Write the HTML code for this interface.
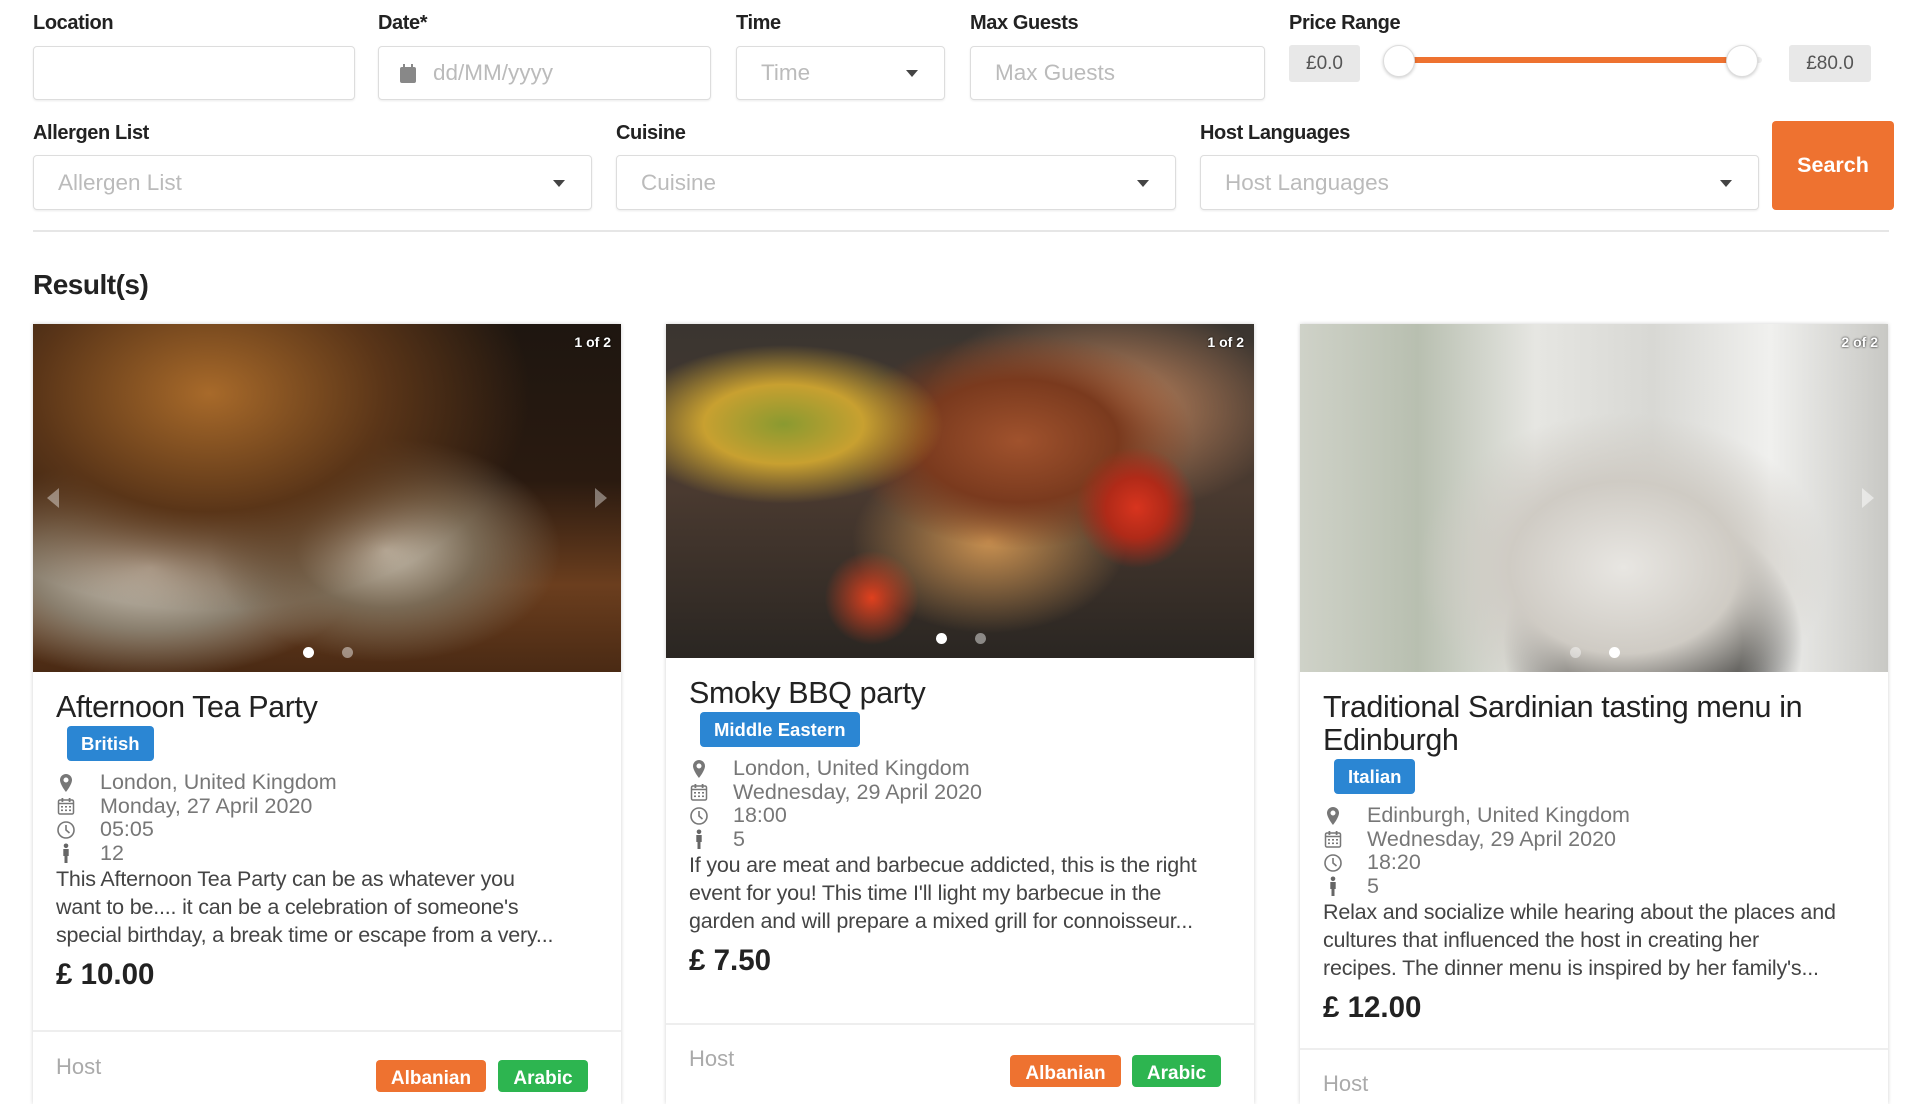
<!DOCTYPE html>
<html><head><meta charset="utf-8"><style>
*{box-sizing:border-box;margin:0;padding:0}
body{width:1920px;height:1080px;overflow:hidden;background:#fff;font-family:"Liberation Sans",sans-serif;color:#222;position:relative}
.lbl{position:absolute;font-size:20px;font-weight:bold;color:#222;letter-spacing:-0.4px}
.in{position:absolute;border:1px solid #ddd;border-radius:4px;background:#fff;box-shadow:0 1px 2px rgba(0,0,0,.08);font-size:22.5px;color:#bbb;padding-left:24px;display:flex;align-items:center}
.caret{position:absolute;right:26px;top:50%;margin-top:-3px;width:0;height:0;border-left:6px solid transparent;border-right:6px solid transparent;border-top:7px solid #444}
.pbox{position:absolute;background:#e8e8e8;border-radius:3px;font-size:19px;color:#555;display:flex;align-items:center;justify-content:center}
.card{position:absolute;top:324px;background:#fff;box-shadow:0 0 4px rgba(0,0,0,.18);height:780px;overflow:hidden}
.img{position:relative;overflow:hidden}
.cnt{position:absolute;right:10px;top:10px;color:#fff;font-size:14px;font-weight:bold;text-shadow:0 0 2px #000}
.dots{position:absolute;bottom:14px;left:50%;margin-left:-24px;display:flex;gap:28px}
.dots i{width:11px;height:11px;border-radius:50%;background:rgba(255,255,255,.45)}
.dots i:first-child{background:#fff}
.body{padding:19px 23px 0 23px}
.title{font-size:30.5px;line-height:33px;color:#222;letter-spacing:-0.4px}
.badge{display:inline-block;background:#2b86d3;color:#fff;font-size:18.5px;font-weight:bold;border-radius:4px;height:35px;line-height:35px;padding:0 14px;margin:2px 0 0 11px}
.det{margin-top:10px;font-size:21.5px;line-height:23.5px;color:#777}
.det div{display:flex;align-items:center}
.det svg{width:20px;height:20px;margin-right:24px;flex:none}
.desc{font-size:21.5px;line-height:28px;color:#444;white-space:nowrap;letter-spacing:-0.2px}
.price{font-size:29.5px;font-weight:bold;line-height:34px;margin-top:9px;color:#222}
.foot{position:absolute;left:0;right:0;border-top:2px solid #eee}
.host{position:absolute;left:23px;font-size:22px;color:#aaa}
.lb{position:absolute;height:32px;border-radius:4px;color:#fff;font-weight:bold;font-size:19px;text-align:center;line-height:38px;overflow:hidden}
</style></head><body>

<div class="lbl" style="left:33px;top:12px">Location</div>
<div class="lbl" style="left:378px;top:12px">Date*</div>
<div class="lbl" style="left:736px;top:12px">Time</div>
<div class="lbl" style="left:970px;top:12px">Max Guests</div>
<div class="lbl" style="left:1289px;top:12px">Price Range</div>

<div class="in" style="left:33px;top:46px;width:322px;height:54px"></div>
<div class="in" style="left:378px;top:46px;width:333px;height:54px;padding-left:20px"><svg width="18" height="22" viewBox="0 0 18 22" style="margin-right:16px"><rect x="1" y="5" width="16" height="16" rx="2" fill="#888"/><rect x="4" y="2" width="2" height="5" fill="#888"/><rect x="12" y="2" width="2" height="5" fill="#888"/></svg>dd/MM/yyyy</div>
<div class="in" style="left:736px;top:46px;width:209px;height:54px">Time<span class="caret"></span></div>
<div class="in" style="left:970px;top:46px;width:295px;height:54px">Max Guests</div>

<div class="pbox" style="left:1289px;top:45px;width:71px;height:37px">£0.0</div>
<div style="position:absolute;left:1392px;top:57px;width:370px;height:6px;background:#eee;border-radius:3px"></div>
<div style="position:absolute;left:1400px;top:57px;width:340px;height:6px;background:#ee7230"></div>
<div style="position:absolute;left:1383px;top:45px;width:32px;height:32px;border-radius:50%;background:#fff;border:1px solid #ddd;box-shadow:0 1px 3px rgba(0,0,0,.2)"></div>
<div style="position:absolute;left:1726px;top:45px;width:32px;height:32px;border-radius:50%;background:#fff;border:1px solid #ddd;box-shadow:0 1px 3px rgba(0,0,0,.2)"></div>
<div class="pbox" style="left:1789px;top:45px;width:82px;height:37px">£80.0</div>

<div class="lbl" style="left:33px;top:122px">Allergen List</div>
<div class="lbl" style="left:616px;top:122px">Cuisine</div>
<div class="lbl" style="left:1200px;top:122px">Host Languages</div>
<div class="in" style="left:33px;top:155px;width:559px;height:55px">Allergen List<span class="caret"></span></div>
<div class="in" style="left:616px;top:155px;width:560px;height:55px">Cuisine<span class="caret"></span></div>
<div class="in" style="left:1200px;top:155px;width:559px;height:55px">Host Languages<span class="caret"></span></div>
<div style="position:absolute;left:1772px;top:121px;width:122px;height:89px;background:#ee7230;border-radius:4px;color:#fff;font-weight:bold;font-size:21.5px;display:flex;align-items:center;justify-content:center">Search</div>

<div style="position:absolute;left:33px;top:230px;width:1856px;height:2px;background:#e6e6e6"></div>
<div style="position:absolute;left:33px;top:269px;font-size:28px;font-weight:bold;color:#222;letter-spacing:-0.5px">Result(s)</div>

<svg width="0" height="0" style="position:absolute"><defs>
<symbol id="pin" viewBox="0 0 20 20"><path d="M10 1a6 6 0 0 0-6 6c0 4.5 6 12 6 12s6-7.5 6-12a6 6 0 0 0-6-6zm0 8.5a2.5 2.5 0 1 1 0-5 2.5 2.5 0 0 1 0 5z" fill="#777"/></symbol>
<symbol id="cal" viewBox="0 0 20 20"><rect x="2.5" y="4" width="15" height="14" rx="1.5" fill="none" stroke="#777" stroke-width="1.5"/><rect x="5.5" y="2" width="1.8" height="4" fill="#777"/><rect x="12.7" y="2" width="1.8" height="4" fill="#777"/><path d="M3 7.5h14" stroke="#777" stroke-width="1.5"/><g fill="#777"><rect x="5" y="10" width="2" height="1.6"/><rect x="9" y="10" width="2" height="1.6"/><rect x="13" y="10" width="2" height="1.6"/><rect x="5" y="13.5" width="2" height="1.6"/><rect x="9" y="13.5" width="2" height="1.6"/><rect x="13" y="13.5" width="2" height="1.6"/></g></symbol>
<symbol id="clk" viewBox="0 0 20 20"><circle cx="10" cy="10" r="8" fill="none" stroke="#777" stroke-width="1.6"/><path d="M10 5v5l3.5 3" fill="none" stroke="#777" stroke-width="1.6"/></symbol>
<symbol id="per" viewBox="0 0 20 20"><circle cx="10" cy="2.8" r="2.3" fill="#666"/><path d="M7.3 6h5.4v7h-1.2v7h-3v-7H7.3z" fill="#666"/></symbol>
</defs></svg>

<!-- Card 1 -->
<div class="card" style="left:33px;width:588px">
 <div class="img" style="height:348px;background:radial-gradient(ellipse at 30% 20%,#a86a2a 0%,#5a3518 30%,transparent 55%),radial-gradient(ellipse at 60% 65%,#c9c0b0 0%,#7a6a55 18%,transparent 35%),radial-gradient(ellipse at 20% 70%,#d8d2c6 0%,#8a7f6e 18%,transparent 32%),linear-gradient(180deg,#1e1610 0%,#2a1a10 45%,#6b3e1e 75%,#4a2a14 100%)">
  <div class="cnt">1 of 2</div>
  <div style="position:absolute;left:14px;top:164px;border-right:12px solid rgba(255,255,255,.4);border-top:10px solid transparent;border-bottom:10px solid transparent"></div>
  <div style="position:absolute;right:14px;top:164px;border-left:12px solid rgba(255,255,255,.4);border-top:10px solid transparent;border-bottom:10px solid transparent"></div>
  <div class="dots"><i></i><i></i></div>
 </div>
 <div class="body">
  <div class="title">Afternoon Tea Party</div>
  <div class="badge">British</div>
  <div class="det">
   <div><svg><use href="#pin"/></svg>London, United Kingdom</div>
   <div><svg><use href="#cal"/></svg>Monday, 27 April 2020</div>
   <div><svg><use href="#clk"/></svg>05:05</div>
   <div><svg><use href="#per"/></svg>12</div>
  </div>
  <div class="desc">This Afternoon Tea Party can be as whatever you<br>want to be.... it can be a celebration of someone's<br>special birthday, a break time or escape from a very...</div>
  <div class="price">£ 10.00</div>
 </div>
 <div class="foot" style="top:706px"></div>
 <div class="host" style="top:730px">Host</div>
 <div class="lb" style="left:343px;top:736px;width:110px;background:#ee7230">Albanian</div>
 <div class="lb" style="left:465px;top:736px;width:90px;background:#2db550">Arabic</div>
</div>

<!-- Card 2 -->
<div class="card" style="left:666px;width:588px">
 <div class="img" style="height:334px;background:radial-gradient(circle at 80% 55%,#d8341e 0%,#b02a18 6%,transparent 12%),radial-gradient(circle at 35% 82%,#e0401e 0%,transparent 10%),radial-gradient(ellipse at 20% 30%,#8a9a30 0%,#c8a030 12%,transparent 24%),radial-gradient(ellipse at 60% 35%,#a0522d 0%,#7a3a1e 20%,transparent 35%),radial-gradient(ellipse at 75% 25%,#c98a60 0%,transparent 30%),radial-gradient(ellipse at 55% 65%,#c89050 0%,transparent 30%),linear-gradient(180deg,#3a3530 0%,#4a3a30 50%,#2a2622 100%)">
  <div class="cnt">1 of 2</div>
  <div class="dots"><i></i><i></i></div>
 </div>
 <div class="body">
  <div class="title">Smoky BBQ party</div>
  <div class="badge">Middle Eastern</div>
  <div class="det">
   <div><svg><use href="#pin"/></svg>London, United Kingdom</div>
   <div><svg><use href="#cal"/></svg>Wednesday, 29 April 2020</div>
   <div><svg><use href="#clk"/></svg>18:00</div>
   <div><svg><use href="#per"/></svg>5</div>
  </div>
  <div class="desc">If you are meat and barbecue addicted, this is the right<br>event for you! This time I'll light my barbecue in the<br>garden and will prepare a mixed grill for connoisseur...</div>
  <div class="price">£ 7.50</div>
 </div>
 <div class="foot" style="top:699px"></div>
 <div class="host" style="top:722px">Host</div>
 <div class="lb" style="left:344px;top:731px;width:111px;background:#ee7230">Albanian</div>
 <div class="lb" style="left:466px;top:731px;width:89px;background:#2db550">Arabic</div>
</div>

<!-- Card 3 -->
<div class="card" style="left:1300px;width:588px">
 <div class="img" style="height:348px;background:radial-gradient(ellipse at 55% 70%,#e8e6e2 0%,#cfcbc4 25%,transparent 45%),radial-gradient(ellipse at 60% 92%,#2a2a2a 0%,#3a3a38 18%,transparent 30%),linear-gradient(90deg,#cfd2c8 0%,#b8bfb0 20%,#e6e6e2 40%,#d8d8d4 60%,#f0f0ee 80%,#c8c8c4 100%)">
  <div class="cnt">2 of 2</div>
  <div style="position:absolute;right:14px;top:164px;border-left:12px solid rgba(255,255,255,.5);border-top:10px solid transparent;border-bottom:10px solid transparent"></div>
  <div class="dots"><i style="background:rgba(255,255,255,.45)"></i><i style="background:#fff"></i></div>
 </div>
 <div class="body">
  <div class="title">Traditional Sardinian tasting menu in<br>Edinburgh</div>
  <div class="badge">Italian</div>
  <div class="det">
   <div><svg><use href="#pin"/></svg>Edinburgh, United Kingdom</div>
   <div><svg><use href="#cal"/></svg>Wednesday, 29 April 2020</div>
   <div><svg><use href="#clk"/></svg>18:20</div>
   <div><svg><use href="#per"/></svg>5</div>
  </div>
  <div class="desc">Relax and socialize while hearing about the places and<br>cultures that influenced the host in creating her<br>recipes. The dinner menu is inspired by her family's...</div>
  <div class="price">£ 12.00</div>
 </div>
 <div class="foot" style="top:724px"></div>
 <div class="host" style="top:747px">Host</div>
</div>

</body></html>
